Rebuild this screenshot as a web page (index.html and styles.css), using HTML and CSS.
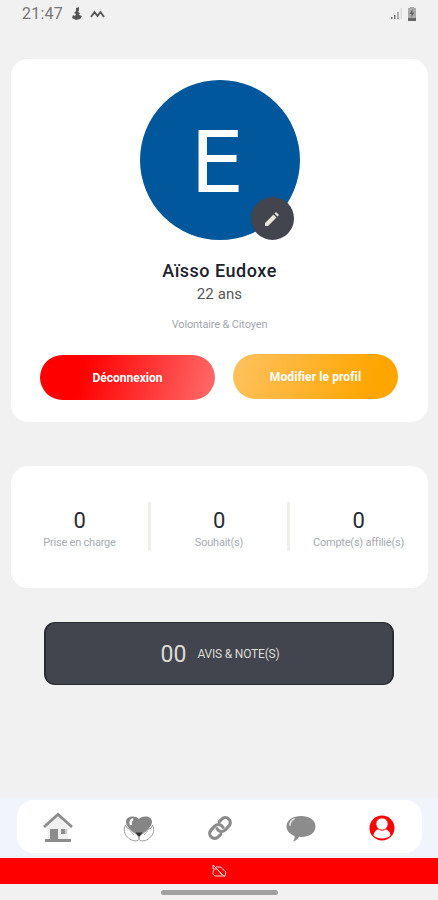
FILE: index.html
```html
<!DOCTYPE html>
<html lang="fr">
<head>
  <meta charset="UTF-8" />
  <meta name="viewport" content="width=device-width, initial-scale=1.0" />
  <title>Profil</title>
  <link rel="stylesheet" href="styles.css">
</head>
<body>
  <header class="status">
    <span class="time">21:47</span>
    <svg width="12" height="14" viewBox="0 0 12 14"><path d="M5 1l3-.8v3L7 5l2 1-1 2 3 1-2 3-4 1-4-2 1-3 2 1 1-2-2-1 2-2z" fill="#555"/></svg>
    <svg class="wave" width="15" height="10" viewBox="0 0 15 10"><path d="M1 8l3.500-5L7.500 7l3-4L14 8" fill="none" stroke="#555" stroke-width="1.800"/></svg>
    <div class="right">
      <svg width="13" height="13" viewBox="0 0 13 13"><path d="M1 10h1.500v2H1zM4 8h1.500v4H4z" fill="#777"/><path d="M7 5h1.800v7H7z" fill="#aaa"/><path d="M10.500 1h1.500v11h-1.500z" fill="#ddd"/></svg>
      <svg width="10" height="14" viewBox="0 0 10 14"><path d="M3 0h4v1h2v13H1V1h2z" fill="#aaa"/><path d="M1 11h8v3H1zM5.500 2L2.500 7h2v3l3-4.500H5.500z" fill="#666"/></svg>
    </div>
  </header>

  <main>
    <section class="card profile">
      <div class="avatar">
        <span class="letter">E</span>
        <div class="edit">
          <svg width="18" height="18" viewBox="0 0 18 18"><path d="M2 13L10.500 4.500l3 3L5 16H2zM11.500 3.500L13 2l3 3-1.500 1.500z" fill="#e8e6d8"/></svg>
        </div>
      </div>
      <h1>Aïsso Eudoxe</h1>
      <p class="age">22 ans</p>
      <p class="role">Volontaire &amp; Citoyen</p>
      <div class="buttons">
        <button class="logout">Déconnexion</button>
        <button class="modify">Modifier le profil</button>
      </div>
    </section>

    <section class="card stats">
      <div class="stat"><strong>0</strong><span>Prise en charge</span></div>
      <div class="stat"><strong>0</strong><span>Souhait(s)</span></div>
      <div class="stat"><strong>0</strong><span>Compte(s) affilié(s)</span></div>
    </section>

    <div class="reviews"><span class="count">00</span><span class="label">AVIS &amp; NOTE(S)</span></div>
  </main>

  <footer>
    <div class="nav-wrap">
      <nav>
        <a>
          <svg width="32" height="32" viewBox="0 0 32 32"><path d="M5 15L16 5l10 10v13H6z" fill="#f0f0f0"/><path d="M2 15L16 2.500 30 15" fill="none" stroke="#8c8c8c" stroke-width="2.800"/><path d="M8 17h8v10h13v3H3v-3h5zM19 17h4v5h-4z" fill="#8c8c8c"/><path d="M23 17h2v5h-2z" fill="#ccc"/></svg>
        </a>
        <a>
          <svg width="32" height="32" viewBox="0 0 32 32"><path d="M16 24C12 21 3 16 3 10c0-6 9-7 13-3 4-4 13-3 13 3 0 6-9 11-13 14z" fill="#858585"/><path d="M8 13c-1-3 0-5 2-6" fill="none" stroke="#fff" stroke-width="2.500"/><path d="M2.500 13c-2 4-1.500 9 2 12 3 3.500 7 4.500 10.500 3.500 1.500-3 0-5-2-6.500L7 17.500 4 16zM29.500 13c2 4 1.500 9-2 12-3 3.500-7 4.500-10.500 3.500-1.500-3 0-5 2-6.500l6-4.500 3-1.500z" fill="#fff" stroke="#999"/><path d="M7 18.500l4 4.500M25 18.500L21 23" stroke="#aaa"/><path d="M12.500 20.500h7L16 25z" fill="#333"/></svg>
        </a>
        <a>
          <svg width="32" height="32" viewBox="0 0 32 32"><g transform="rotate(-45 16 16)" fill="none" stroke="#8c8c8c" stroke-width="3.200" stroke-linecap="round"><path d="M12 21H8.500a5 5 0 0 1 0-10H14a5 5 0 0 1 4.600 6.500"/><path d="M20 11h3.500a5 5 0 0 1 0 10H18a5 5 0 0 1-4.600-6.500"/></g></svg>
        </a>
        <a>
          <svg width="32" height="32" viewBox="0 0 32 32"><path d="M16 4c8 0 14.500 4 14.500 10.500S24 25 16 25l-2-.2c-1 2-3 4-6 4.700 1-1.500 2-3 1.500-5.500C5 22 1.500 19 1.500 14.500 1.500 8 8 4 16 4z" fill="#8c8c8c"/><path d="M5 13c0-3 2-5 4-6" fill="none" stroke="#ddd" stroke-width="1.800" stroke-linecap="round"/></svg>
        </a>
        <a>
          <svg width="32" height="32" viewBox="0 0 32 32"><circle cx="16" cy="16" r="12.500" fill="#f00"/><path d="M7.500 23.500c.5-4 3-6 6-6.500h5c3 .5 5.500 2.500 6 6.500-2.500 2.300-5.500 3-8.500 3s-6-.7-8.500-3z" fill="#fff"/><circle cx="16" cy="12" r="6.200" fill="#fff" stroke="#f00"/></svg>
        </a>
      </nav>
    </div>
    <div class="offline">
      <svg width="16" height="16" viewBox="0 0 16 16"><path d="M5 4h5c1 2 3 3 5 5l-1 4H5c-3 0-4-3-2-6M2 2l12 12M2 2v4h4M6 6l5 6" fill="none" stroke="#ffd5d5"/></svg>
    </div>
    <div class="gesture"><span></span></div>
  </footer>
</body>
</html>
```
FILE: styles.css
```css
* {
  box-sizing: border-box;
}

body {
  margin: 0;
  height: 900px;
  background: #f1f1f1;
  font-family: Roboto, sans-serif;
  display: flex;
  flex-direction: column;
  overflow: hidden;
}

svg {
  display: block;
}

.status {
  height: 59px;
  padding: 4px 21px 0 22px;
  display: flex;
  align-items: flex-start;
}

.status svg {
  margin-top: 3px;
}

.time {
  width: 49px;
  font-size: 16px;
  line-height: 20px;
  letter-spacing: .2px;
  color: #777;
}

.status .wave {
  margin: 5px 0 0 7px;
}

.right {
  display: flex;
  gap: 4px;
  margin-left: auto;
}

main {
  flex: 1;
  padding: 0 10px 0 11px;
}

.card {
  background: #fff;
  border-radius: 17px;
}

.profile {
  height: 363px;
  padding-top: 21px;
  text-align: center;
}

.avatar {
  position: relative;
  width: 160px;
  height: 160px;
  margin: 0 auto;
  border-radius: 50%;
  background: #01579b;
}

.letter {
  display: block;
  padding-right: 5px;
  font: 85px/166px "DejaVu Sans", sans-serif;
  color: #fff;
}

.edit {
  position: absolute;
  right: 6px;
  bottom: 0;
  width: 43px;
  height: 43px;
  border-radius: 50%;
  background: #42444e;
  display: flex;
  align-items: center;
  justify-content: center;
}

h1 {
  margin: 14px 0 0;
  font-size: 18px;
  line-height: 22px;
  font-weight: 500;
  letter-spacing: .5px;
  color: #20222c;
}

.avatar + h1 {
  margin-top: 20px;
}

.age {
  margin: 2px 0 0;
  font-size: 15px;
  line-height: 20px;
  letter-spacing: .1px;
  color: #555;
}

.role {
  margin: 13px 0 0;
  font-size: 11px;
  line-height: 16px;
  letter-spacing: -.15px;
  color: #a5a8ad;
}

.buttons {
  display: flex;
  gap: 18px;
  padding: 21px 30px 0 29px;
}

button {
  padding: 0;
  border: 0;
  border-radius: 23px;
  font: 700 12px Roboto, sans-serif;
  color: #fff;
}

.logout {
  width: 175px;
  height: 45px;
  margin-top: 1px;
  background: linear-gradient(105deg, #f00 25%, #ff6c6c);
}

.modify {
  width: 165px;
  height: 45px;
  letter-spacing: .1px;
  background: linear-gradient(105deg, #ffc260, #ffa500 85%);
}

.stats {
  height: 122px;
  margin-top: 44px;
  padding: 36px 1px 0 0;
  display: grid;
  grid-template-columns: 137px 139px 140px;
}

.stat {
  height: 49px;
  padding-top: 6px;
  display: flex;
  flex-direction: column;
  align-items: center;
  color: #a5abb1;
  font-size: 11px;
  line-height: 18px;
  letter-spacing: -.22px;
}

.stat + .stat {
  border-left: 3px solid #f0efea;
}

.stat strong {
  font-size: 22px;
  line-height: 26px;
  font-weight: 400;
  color: #292b36;
}

.reviews {
  width: 350px;
  height: 63px;
  margin: 34px auto 0 33px;
  padding-left: 2px;
  border: 1px solid #2b2c32;
  border-width: 1px 2px;
  border-radius: 11px;
  background: #42444e;
  color: #dddcd2;
  display: flex;
  align-items: center;
  justify-content: center;
  gap: 11px;
}

.count {
  font-size: 23px;
  line-height: 30px;
  padding-top: 2px;
}

.label {
  font-size: 12px;
  letter-spacing: -.2px;
}

.nav-wrap {
  height: 60px;
  padding: 2px 16px 0 17px;
  background: #f1f4fa;
}

nav {
  height: 53px;
  padding: 0 0 0 1px;
  border-radius: 17px;
  background: #fff;
  display: grid;
  grid-template-columns: repeat(5, 1fr);
  align-items: center;
  justify-items: center;
}

nav svg {
  margin-top: 3px;
}

.offline {
  height: 26px;
  background: #f00;
  display: flex;
  align-items: center;
  justify-content: center;
}

.gesture {
  height: 16px;
  display: flex;
  justify-content: center;
  padding-top: 6px;
}

.gesture span {
  width: 117px;
  height: 5px;
  border-radius: 3px;
  background: #a0a0a0;
}
```
